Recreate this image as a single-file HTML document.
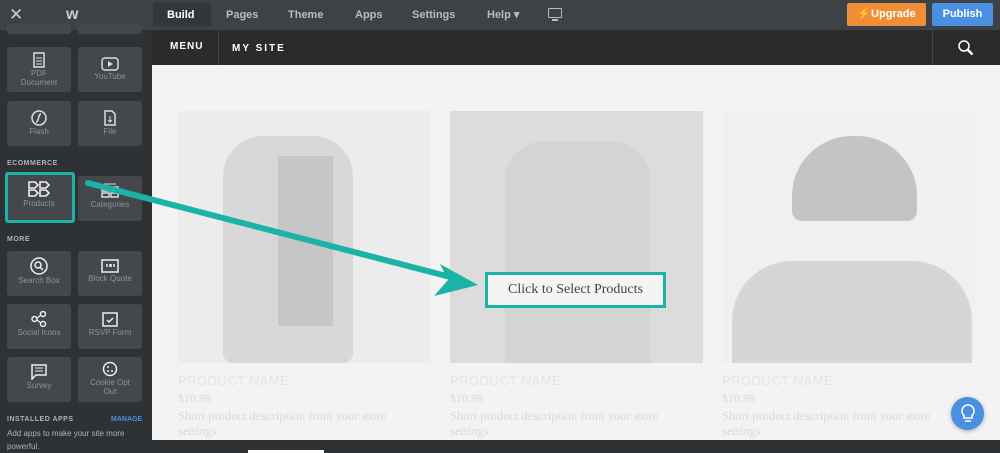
<!DOCTYPE html>
<html><head><style>
*{margin:0;padding:0;box-sizing:border-box}
body{width:1000px;height:453px;overflow:hidden;background:#2e3134;font-family:"Liberation Sans",sans-serif;position:relative}
.top{position:absolute;left:0;top:0;width:1000px;height:30px;background:#3e4246}
.nav{position:absolute;top:0;height:30px;line-height:30px;color:#b8bcc0;font-size:11px;font-weight:bold}
.side{position:absolute;left:0;top:30px;width:152px;height:423px;background:#2f3235}
.tile{position:absolute;width:64px;height:45px;background:#44484c;border-radius:3px;color:#8e9398;font-size:8px;text-align:center}
.tile svg{display:block;margin:5px auto 1px}
.lbl{position:absolute;left:7px;color:#aeb2b6;font-size:7px;font-weight:bold;letter-spacing:.5px}
.hdr{position:absolute;left:152px;top:30px;width:848px;height:35px;background:#2b2b2b}
.content{position:absolute;left:152px;top:65px;width:848px;height:375px;background:#f3f3f3}
.img{position:absolute;top:111px;width:253px;height:252px;background:#ececec;overflow:hidden}
.pn{position:absolute;top:373px;color:#e4e4e4;font-size:13px;letter-spacing:.5px}
.pr{position:absolute;top:391px;color:#dadada;font-family:"Liberation Serif",serif;font-size:12px}
.pd{position:absolute;top:409px;color:#dadada;font-family:"Liberation Serif",serif;font-size:12.5px;line-height:15px;width:250px}
</style></head><body>
<div class="top"></div>
<div class="nav" style="left:9px;font-size:17px;font-weight:normal;color:#ccc">✕</div>
<div class="nav" style="left:66px;font-size:16px;color:#ccc">w</div>
<div style="position:absolute;left:153px;top:3px;width:58px;height:23px;background:#33373a;border-radius:2px"></div>
<div class="nav" style="left:167px;color:#fff">Build</div>
<div class="nav" style="left:226px">Pages</div>
<div class="nav" style="left:288px">Theme</div>
<div class="nav" style="left:355px">Apps</div>
<div class="nav" style="left:412px">Settings</div>
<div class="nav" style="left:487px">Help ▾</div>
<div style="position:absolute;left:548px;top:8px;width:14px;height:10px;border:1.5px solid #b8bcc0;border-radius:1px"></div>
<div style="position:absolute;left:552px;top:19px;width:6px;height:2px;background:#b8bcc0"></div>
<div style="position:absolute;left:847px;top:3px;width:79px;height:23px;background:#ee8f35;border-radius:2px;color:#fff;font-size:11px;font-weight:bold;text-align:center;line-height:23px">⚡Upgrade</div>
<div style="position:absolute;left:932px;top:3px;width:61px;height:23px;background:#4a8fe0;border-radius:2px;color:#fff;font-size:11px;font-weight:bold;text-align:center;line-height:23px">Publish</div>

<div class="side">
<div class="tile" style="left:7px;top:-6px;height:10px"></div>
<div class="tile" style="left:78px;top:-6px;height:10px"></div>
<div class="tile" style="left:7px;top:17px"><svg width="14" height="16"><rect x="2" y="1" width="10" height="14" fill="none" stroke="#ddd" stroke-width="1.5"/><path d="M4 6h6M4 9h6M4 12h6" stroke="#ddd"/></svg><div style="line-height:9px">PDF<br>Document</div></div>
<div class="tile" style="left:78px;top:17px"><svg width="18" height="14" style="margin-top:10px"><rect x="1" y="1" width="16" height="12" rx="3" fill="none" stroke="#ddd" stroke-width="1.5"/><path d="M7 4l5 3-5 3z" fill="#ddd"/></svg>YouTube</div>
<div class="tile" style="left:7px;top:71px"><svg width="16" height="16" style="margin-top:9px"><circle cx="8" cy="8" r="7" fill="none" stroke="#ddd" stroke-width="1.5"/><path d="M10 4c-3 0-2 8-5 8" fill="none" stroke="#ddd" stroke-width="1.5"/></svg>Flash</div>
<div class="tile" style="left:78px;top:71px"><svg width="14" height="16" style="margin-top:9px"><path d="M2 1h7l3 3v11H2z" fill="none" stroke="#ddd" stroke-width="1.5"/><path d="M7 6v6M5 10l2 2 2-2" stroke="#ddd" fill="none"/></svg>File</div>
<div class="lbl" style="top:130px">ECOMMERCE</div>
<div class="tile" style="left:78px;top:146px"><svg width="18" height="16" style="margin-top:7px"><path d="M3 1h12" stroke="#ddd"/><rect x="1" y="4" width="7" height="4" fill="none" stroke="#ddd" stroke-width="1.5"/><rect x="10" y="4" width="7" height="4" fill="none" stroke="#ddd" stroke-width="1.5"/><rect x="1" y="10" width="7" height="4" fill="none" stroke="#ddd" stroke-width="1.5"/><rect x="10" y="10" width="7" height="4" fill="none" stroke="#ddd" stroke-width="1.5"/></svg>Categories</div>
<div style="position:absolute;left:5px;top:142px;width:70px;height:51px;border:3px solid #1ab3a6;border-radius:3px;background:#44484c"></div>
<div class="tile" style="left:10px;top:146px;width:58px;height:42px;background:#44484c"><svg width="24" height="18" style="margin-top:4px"><path d="M2 2h6l3 3-3 3H2zM13 2h6l3 3-3 3h-6zM2 10h6l3 3-3 3H2zM13 10h6l3 3-3 3h-6z" fill="none" stroke="#eee" stroke-width="1.6"/></svg>Products</div>
<div class="lbl" style="top:206px">MORE</div>
<div class="tile" style="left:7px;top:221px"><svg width="18" height="18" style="margin-top:6px"><circle cx="9" cy="9" r="8" fill="none" stroke="#eee" stroke-width="1.5"/><circle cx="8" cy="8" r="3" fill="none" stroke="#eee" stroke-width="1.5"/><path d="M10 10l3 3" stroke="#eee" stroke-width="1.5"/></svg>Search Box</div>
<div class="tile" style="left:78px;top:221px"><svg width="18" height="14" style="margin-top:8px"><rect x="1" y="1" width="16" height="12" fill="none" stroke="#eee" stroke-width="1.5"/><path d="M6 5v3M9 5v3M10 5v3M13 5v3" stroke="#eee" stroke-width="1.5"/></svg>Block Quote</div>
<div class="tile" style="left:7px;top:274px"><svg width="16" height="16" style="margin-top:7px"><circle cx="3.5" cy="8" r="2.5" fill="none" stroke="#eee" stroke-width="1.5"/><circle cx="12" cy="3" r="2.5" fill="none" stroke="#eee" stroke-width="1.5"/><circle cx="12" cy="13" r="2.5" fill="none" stroke="#eee" stroke-width="1.5"/><path d="M6 7l4-3M6 9l4 3" stroke="#eee" stroke-width="1.3"/></svg>Social Icons</div>
<div class="tile" style="left:78px;top:274px"><svg width="16" height="16" style="margin-top:7px"><rect x="1" y="2" width="14" height="13" fill="none" stroke="#eee" stroke-width="1.5"/><path d="M5 9l2 2 4-4" stroke="#eee" stroke-width="1.5" fill="none"/></svg>RSVP Form</div>
<div class="tile" style="left:7px;top:327px"><svg width="16" height="16" style="margin-top:7px"><path d="M1 1h14v10H5l-4 4z" fill="none" stroke="#eee" stroke-width="1.5"/><path d="M4 4h8M4 7h8" stroke="#eee"/></svg>Survey</div>
<div class="tile" style="left:78px;top:327px"><svg width="16" height="16" style="margin-top:4px"><circle cx="8" cy="8" r="6.5" fill="none" stroke="#eee" stroke-width="1.5"/><circle cx="6" cy="6" r="1" fill="#eee"/><circle cx="10" cy="10" r="1" fill="#eee"/><circle cx="6" cy="10" r="1" fill="#eee"/></svg><div style="line-height:9px">Cookie Opt<br>Out</div></div>
<div class="lbl" style="top:386px">INSTALLED APPS</div>
<div style="position:absolute;left:111px;top:386px;color:#4a8fe0;font-size:7px;font-weight:bold">MANAGE</div>
<div style="position:absolute;left:7px;top:397px;color:#aeb2b6;font-size:8px;line-height:13px">Add apps to make your site more<br>powerful.</div>
</div>

<div class="hdr"></div>
<div style="position:absolute;left:170px;top:41px;color:#fff;font-size:10px;font-weight:bold;letter-spacing:1px">MENU</div>
<div style="position:absolute;left:218px;top:30px;width:1px;height:35px;background:#444"></div>
<div style="position:absolute;left:232px;top:43px;color:#fff;font-size:10px;font-weight:bold;letter-spacing:2px">MY SITE</div>
<div style="position:absolute;left:932px;top:30px;width:1px;height:35px;background:#444"></div>
<svg style="position:absolute;left:957px;top:39px" width="18" height="18"><circle cx="7" cy="7" r="5" fill="none" stroke="#fff" stroke-width="1.5"/><path d="M10.5 10.5l5 5" stroke="#fff" stroke-width="2.5"/></svg>

<div class="content"></div>
<div class="img" style="left:178px"><div style="position:absolute;left:45px;top:25px;width:130px;height:227px;background:#d8d8d8;border-radius:40px 40px 10px 10px"></div><div style="position:absolute;left:100px;top:45px;width:55px;height:170px;background:#c6c6c6"></div></div>
<div class="img" style="left:450px;background:#dcdcdc"><div style="position:absolute;left:55px;top:30px;width:145px;height:222px;background:#d2d5d3;border-radius:40px 40px 0 0"></div></div>
<div class="img" style="left:722px;background:#f0f0f0"><div style="position:absolute;left:70px;top:25px;width:125px;height:85px;background:#c4c4c4;border-radius:60px 60px 10px 10px"></div><div style="position:absolute;left:10px;top:150px;width:240px;height:102px;background:#d6d6d6;border-radius:60px 60px 0 0"></div></div>
<div class="pn" style="left:178px">PRODUCT NAME</div><div class="pn" style="left:450px">PRODUCT NAME</div><div class="pn" style="left:722px">PRODUCT NAME</div>
<div class="pr" style="left:178px">$10.99</div><div class="pr" style="left:450px">$10.99</div><div class="pr" style="left:722px">$10.99</div>
<div class="pd" style="left:178px">Short product description from your store settings.</div>
<div class="pd" style="left:450px">Short product description from your store settings.</div>
<div class="pd" style="left:722px">Short product description from your store settings.</div>

<div style="position:absolute;left:485px;top:272px;width:181px;height:36px;border:3px solid #1ab3a6;background:#f4f4f4;font-family:'Liberation Serif',serif;font-size:14px;color:#444;text-align:center;line-height:30px">Click to Select Products</div>
<svg style="position:absolute;left:0;top:0" width="1000" height="453"><path d="M88 183L462 280" stroke="#1ab3a6" stroke-width="6" stroke-linecap="round"/><path d="M478 285L440 264L448 280L434 296Z" fill="#1ab3a6"/></svg>

<div style="position:absolute;left:951px;top:397px;width:33px;height:33px;border-radius:50%;background:#4a8fe0;box-shadow:0 1px 4px rgba(0,0,0,.3)"></div>
<svg style="position:absolute;left:958px;top:403px" width="20" height="22"><path d="M10 2a6 6 0 0 0-4 10.5V15h8v-2.5A6 6 0 0 0 10 2zM7 18h6" fill="none" stroke="#fff" stroke-width="1.6"/></svg>
<div style="position:absolute;left:248px;top:450px;width:76px;height:3px;background:#fff"></div>
</body></html>
